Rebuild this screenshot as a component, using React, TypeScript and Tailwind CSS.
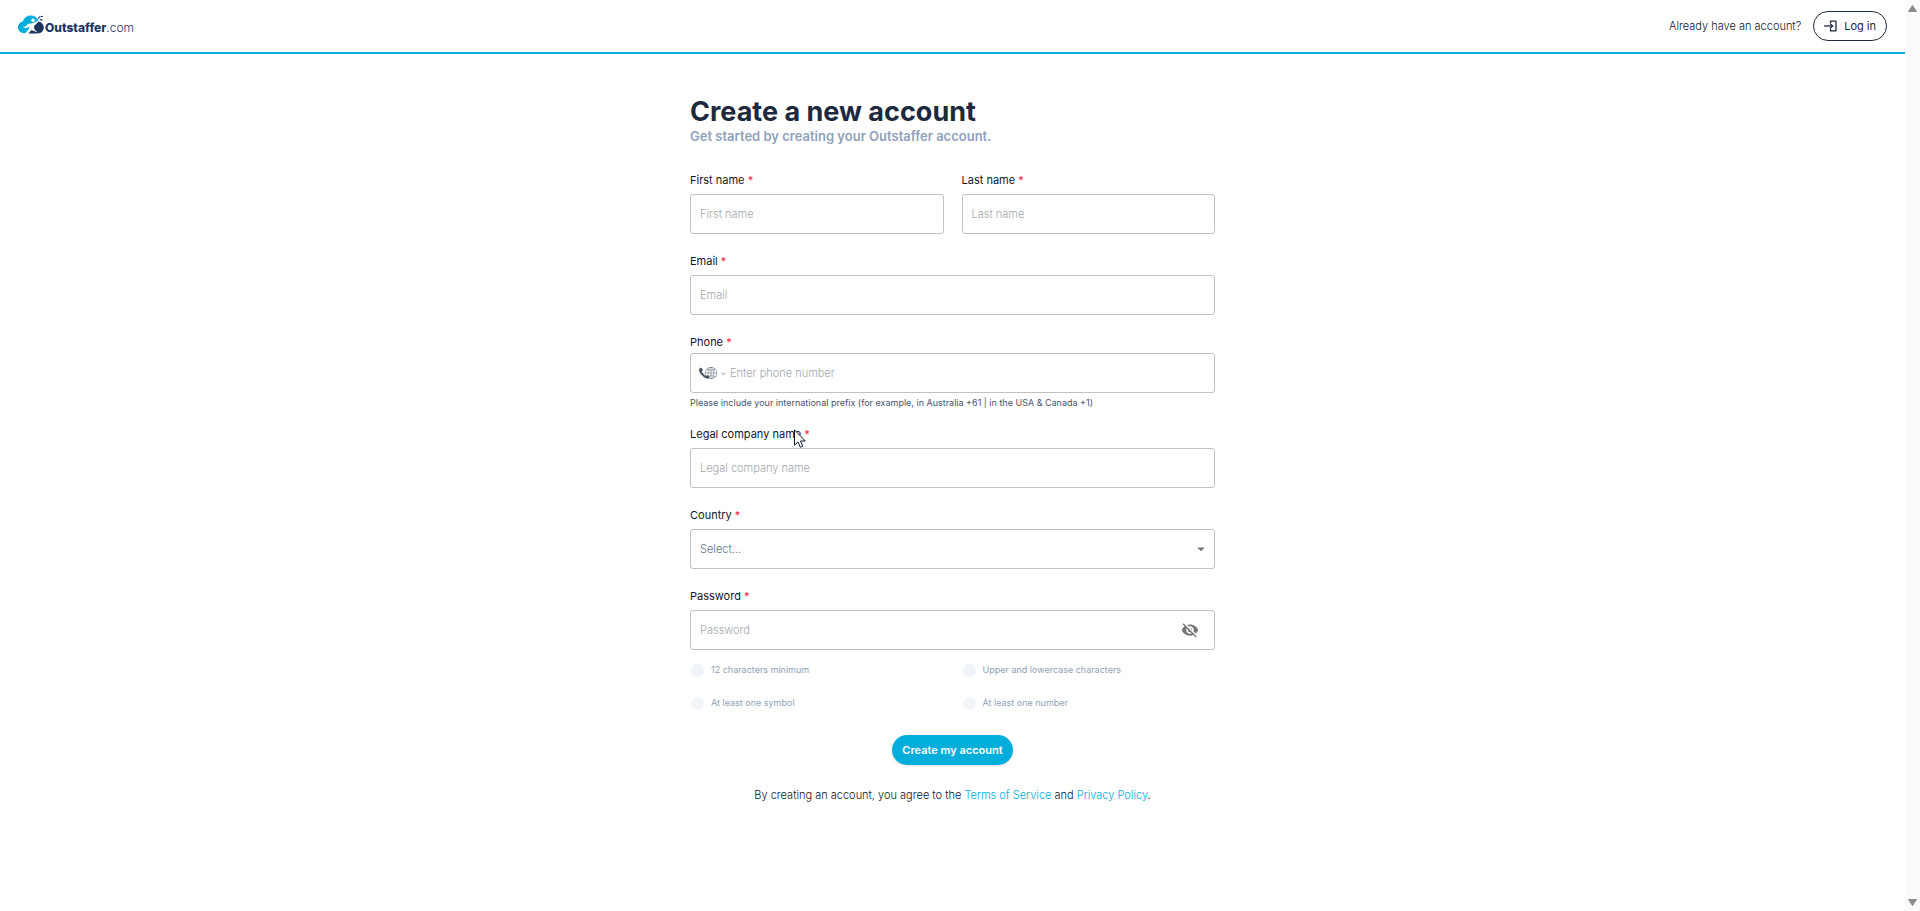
import { useState } from 'react';
import type { ReactNode } from 'react';
import { MdArrowDropDown, MdVisibility, MdVisibilityOff } from 'react-icons/md';

const inputClass =
  'block h-10 w-full rounded-[3px] border border-[#c1c1c1] bg-white px-[9px] text-[11px] font-light placeholder:text-[#a3a7ae] focus:border-[#00aedb] focus:outline-none';

const passwordRules = [
  '12 characters minimum',
  'Upper and lowercase characters',
  'At least one symbol',
  'At least one number',
];

interface FieldProps {
  id: string;
  label: string;
  tight?: boolean;
  children: ReactNode;
}

function Field({ id, label, tight, children }: FieldProps) {
  return (
    <div>
      <label
        htmlFor={id}
        className={`block text-[11px] leading-4 text-slate-900 ${tight ? 'mb-[3px]' : 'mb-[6px]'}`}
      >
        {label} <span className="text-[#ff1744]">*</span>
      </label>
      {children}
    </div>
  );
}

function LogoMark() {
  return (
    <svg viewBox="0 0 26 19" className="h-[19px] w-[26px]" aria-hidden="true">
      <path
        d="M6 18.300a5.900 5.900 0 0 1-1.200-11.700C5.800 3 8.900.5 12.800.5c3.300 0 6.100 1.800 7.400 4.500l-2 3.500-6 1.500-1.200 5.500-1.500 1.700A5.900 5.900 0 0 1 6 18.300z"
        fill="#00aedb"
      />
      <path d="M20.700 6.500c3 .7 5.100 3 5.100 6 0 3.400-2.600 5.900-6 5.900h-9.300l2.500-3.400 3.500.5-.5-4.500z" fill="#1d3461" />
      <circle cx="15" cy="5.200" r="1.700" fill="#fff" />
      <path
        d="M4.300 11.300c2.500 1 4.200-.3 5.600-2.600 2.800.3 5.800-.2 9.900-3.200-.8 2.600-2.300 4-4.300 5l-.3 2.800 4.600 4.200-6.300-2.500-3.200 3.300H7.200l4-4.800v-2.200c-1.600 2-4.300 2.600-6.900 0z"
        fill="#fff"
      />
      <path d="M20 3.600l2-2M22.500 1.800l2.500-.6M21.800 4.600l2.700.3" stroke="#1d3461" strokeWidth="1.100" fill="none" />
    </svg>
  );
}

function LoginIcon() {
  return (
    <svg viewBox="0 0 13 12" className="h-3 w-[13px]" fill="none" stroke="currentColor" aria-hidden="true">
      <path d="M6.500 3V1.200H12V10.800H6.500V9" strokeWidth="1.300" strokeLinejoin="round" />
      <path d="M0 6h8.500" strokeWidth="1.300" />
      <path d="M6 3.600L8.600 6L6 8.400" strokeWidth="1.300" />
    </svg>
  );
}

function InternationalIcon() {
  return (
    <svg viewBox="0 0 75 50" className="h-3 w-[18px] text-gray-600" aria-hidden="true">
      <g stroke="currentColor" fill="none" strokeWidth="2" strokeMiterlimit="10">
        <path strokeLinecap="round" d="M47.2,36.1C48.1,36,49,36,50,36c7.4,0,14,1.7,18.5,4.3" />
        <path d="M68.6,9.6C64.2,12.3,57.5,14,50,14c-7.4,0-14-1.7-18.5-4.3" />
        <line x1="26" y1="25" x2="74" y2="25" />
        <line x1="50" y1="1" x2="50" y2="49" />
        <path
          strokeLinecap="round"
          d="M46.3,48.7c1.2,0.2,2.5,0.3,3.7,0.3c13.3,0,24-10.7,24-24S63.3,1,50,1S26,11.7,26,25c0,2,0.3,3.9,0.7,5.8"
        />
        <path
          strokeLinecap="round"
          d="M46.8,48.2c1,0.6,2.1,0.8,3.2,0.8c6.6,0,12-10.7,12-24S56.6,1,50,1S38,11.7,38,25c0,1.4,0.1,2.7,0.2,4c0,0.1,0,0.2,0,0.2"
        />
      </g>
      <path
        fill="currentColor"
        d="M12.4,17.9c2.9-2.9,5.4-4.8,0.3-11.2S4.1,5.2,1.3,8.1C-2,11.4,1.1,23.5,13.1,35.6s24.3,15.2,27.5,11.9c2.8-2.8,7.8-6.3,1.4-11.5s-8.3-2.6-11.2,0.3c-2,2-7.2-2.2-11.7-6.7S10.4,19.9,12.4,17.9z"
      />
    </svg>
  );
}

function Header() {
  return (
    <header className="flex h-[54px] items-center justify-between border-b-2 border-[#00aedb] px-[18px]">
      <a href="#" className="flex items-end pb-1 text-[#1d3461]">
        <LogoMark />
        <span className="ml-[1px] text-xs leading-3 font-extrabold">
          Outstaffer<span className="font-light">.com</span>
        </span>
      </a>

      <div className="flex items-center gap-3">
        <span className="text-[11px] leading-4 font-light text-slate-900">Already have an account?</span>
        <button
          type="button"
          className="flex h-[30px] items-center gap-[7px] rounded-full border border-slate-800 px-[10px] text-[11px] text-slate-800"
        >
          <LoginIcon />
          Log in
        </button>
      </div>
    </header>
  );
}

function Scrollbar() {
  return (
    <div className="flex w-[15px] shrink-0 flex-col items-center justify-between bg-[#fbfbfb] py-[5px]">
      <svg viewBox="0 0 9 7" className="h-[7px] w-[9px]" aria-hidden="true">
        <path d="M4.500 0.500L8.500 6.500H0.500z" fill="#8b8b8b" stroke="#8b8b8b" strokeLinejoin="round" />
      </svg>
      <svg viewBox="0 0 9 7" className="h-[7px] w-[9px]" aria-hidden="true">
        <path d="M4.500 6.500L8.500 0.500H0.500z" fill="#8b8b8b" stroke="#8b8b8b" strokeLinejoin="round" />
      </svg>
    </div>
  );
}

export default function App() {
  const [showPassword, setShowPassword] = useState(false);

  return (
    <div className="flex min-h-screen bg-white font-['Inter',sans-serif]">
      <div className="min-w-0 flex-1">
        <Header />

        <main className="mx-auto w-full max-w-[525px] pt-[42px]">
          <h1 className="text-[27px] leading-8 font-bold text-slate-800">Create a new account</h1>
          <p className="text-[13px] leading-4 font-semibold text-slate-400">
            Get started by creating your Outstaffer account.
          </p>

          <form className="mt-7" onSubmit={(e) => e.preventDefault()}>
            <div className="flex flex-col gap-[19px]">
              <div className="grid grid-cols-2 gap-[18px]">
                <Field id="firstName" label="First name">
                  <input id="firstName" type="text" placeholder="First name" className={`${inputClass} text-slate-800`} />
                </Field>
                <Field id="lastName" label="Last name">
                  <input id="lastName" type="text" placeholder="Last name" className={`${inputClass} text-slate-800`} />
                </Field>
              </div>

              <Field id="email" label="Email">
                <input id="email" type="email" placeholder="Email" className={`${inputClass} text-slate-800`} />
              </Field>

              <Field id="phone" label="Phone" tight>
                <div className="flex h-10 items-center rounded-[3px] border border-[#c1c1c1] px-2">
                  {/* Native select sits invisibly over the icon */}
                  <div className="relative flex items-center gap-1">
                    <select aria-label="Phone number country" className="absolute inset-0 opacity-0">
                      <option value="">International</option>
                    </select>
                    <InternationalIcon />
                    <svg viewBox="0 0 5 4" className="mt-[2px] h-1 w-[5px]" aria-hidden="true">
                      <path d="M0.500 0.800L2.500 2.800L4.500 0.800" fill="none" stroke="#8a8f98" />
                    </svg>
                  </div>
                  <input
                    id="phone"
                    type="tel"
                    placeholder="Enter phone number"
                    className="ml-1 min-w-0 flex-1 text-[11px] font-light text-slate-800 placeholder:text-[#a3a7ae] focus:outline-none"
                  />
                </div>
                <p className="mt-1 -mb-[2px] text-[9px] leading-3 text-slate-600">
                  Please include your international prefix (for example, in Australia +61 | in the USA &amp; Canada +1)
                </p>
              </Field>

              <div className="relative">
                <Field id="company" label="Legal company name">
                  <input
                    id="company"
                    type="text"
                    placeholder="Legal company name"
                    className={`${inputClass} text-slate-800`}
                  />
                </Field>
                {/* Mouse pointer */}
                <svg viewBox="0 0 12 19" className="absolute top-[3px] left-[104px] h-[19px] w-3" aria-hidden="true">
                  <path
                    d="M0.500 0.800V16.200L4 12.900L6.300 18.200L8.700 17.200L6.500 12H11.300z"
                    fill="#fff"
                    stroke="#111827"
                  />
                </svg>
              </div>

              <Field id="country" label="Country">
                <div className="relative">
                  <select id="country" defaultValue="" className={`${inputClass} appearance-none text-slate-500`}>
                    <option value="">Select...</option>
                    <option value="AU">Australia</option>
                    <option value="CA">Canada</option>
                    <option value="US">United States</option>
                  </select>
                  <MdArrowDropDown className="pointer-events-none absolute top-[11px] right-[5px] size-[18px] text-[#757575]" />
                </div>
              </Field>

              <Field id="password" label="Password">
                <div className="relative">
                  <input
                    id="password"
                    type={showPassword ? 'text' : 'password'}
                    placeholder="Password"
                    className={`${inputClass} text-slate-800`}
                  />
                  <button
                    type="button"
                    aria-label="Toggle password visibility"
                    onClick={() => setShowPassword(!showPassword)}
                    className="absolute top-[11px] right-4 text-[#757575]"
                  >
                    {showPassword ? <MdVisibility className="size-[18px]" /> : <MdVisibilityOff className="size-[18px]" />}
                  </button>
                </div>
              </Field>
            </div>

            <ul className="mt-[13px] grid grid-cols-2 gap-x-[18px] gap-y-[19px]">
              {passwordRules.map((rule) => (
                <li key={rule} className="flex h-[14px] items-center gap-[7px] pl-[1px] text-[9px] text-slate-400">
                  <span className="size-[13px] rounded-full bg-slate-100" />
                  {rule}
                </li>
              ))}
            </ul>

            <button
              type="submit"
              className="mx-auto mt-[25px] block h-[30px] rounded-full bg-[#00aedb] px-[10px] text-[11px] font-semibold text-white shadow"
            >
              Create my account
            </button>
          </form>

          <p className="mt-[22px] text-center text-[11px] leading-4 font-light text-slate-900">
            By creating an account, you agree to the{' '}
            <a href="#" className="text-[#00aedb]">
              Terms of Service
            </a>{' '}
            and{' '}
            <a href="#" className="text-[#00aedb]">
              Privacy Policy
            </a>
            .
          </p>
        </main>
      </div>

      <Scrollbar />
    </div>
  );
}
